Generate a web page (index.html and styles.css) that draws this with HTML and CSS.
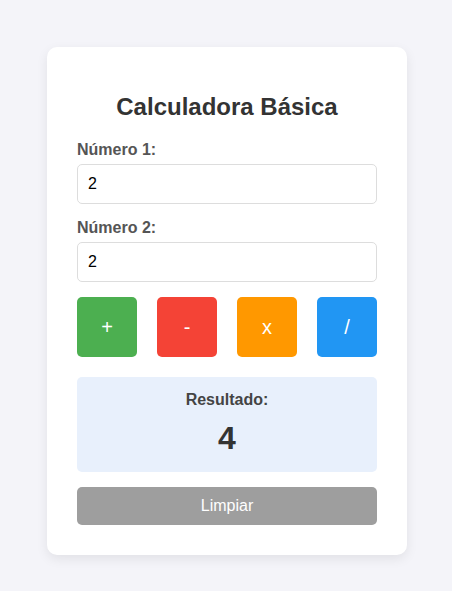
FILE: index.html
```html
<!DOCTYPE html>
<html lang="es">
<head>
<meta charset="utf-8">
<title>Calculadora Básica</title>
<link rel="stylesheet" href="styles.css">
</head>
<body>
<div class="card">
  <h2 class="title">Calculadora Básica</h2>
  <label class="label" for="n1">Número 1:</label>
  <input class="field" id="n1" type="number" value="2">
  <label class="label" for="n2">Número 2:</label>
  <input class="field" id="n2" type="number" value="2">
  <div class="ops">
    <button class="op op-add">+</button>
    <button class="op op-sub">-</button>
    <button class="op op-mul">x</button>
    <button class="op op-div">/</button>
  </div>
  <div class="result">
    <div class="result-label">Resultado:</div>
    <div class="result-value">4</div>
  </div>
  <button class="clear">Limpiar</button>
</div>
</body>
</html>
```
FILE: styles.css
```css
html, body {
  margin: 0;
  padding: 0;
}
body {
  background: #f4f4f9;
  font-family: "Liberation Sans", Arial, sans-serif;
  display: flex;
  justify-content: center;
  padding-top: 47px;
  padding-left: 2px;
  min-height: 591px;
  box-sizing: border-box;
}
.card {
  width: 300px;
  padding: 30px;
  background: #ffffff;
  border-radius: 10px;
  box-shadow: 0 4px 12px rgba(0, 0, 0, 0.08);
  height: 448px;
}
.title {
  margin: 16px 0 20px;
  font-size: 24px;
  font-weight: bold;
  color: #333333;
  text-align: center;
}
.label {
  display: block;
  font-size: 16px;
  font-weight: bold;
  color: #555555;
  margin-bottom: 5px;
}
.field {
  display: block;
  width: 100%;
  box-sizing: border-box;
  padding: 10px;
  font-family: "Liberation Sans", Arial, sans-serif;
  font-size: 16px;
  color: #000000;
  border: 1px solid #dddddd;
  border-radius: 5px;
  margin-bottom: 15px;
  outline: none;
  -moz-appearance: textfield;
}
.field::-webkit-inner-spin-button,
.field::-webkit-outer-spin-button {
  -webkit-appearance: none;
  margin: 0;
}
.ops {
  display: flex;
  justify-content: space-between;
  margin-top: 15px;
  margin-bottom: 20px;
}
.op {
  width: 60px;
  height: 60px;
  border: none;
  border-radius: 5px;
  color: #ffffff;
  font-family: "Liberation Sans", Arial, sans-serif;
  font-size: 20px;
  padding: 0;
}
.op-add { background: #4caf50; }
.op-sub { background: #f44336; }
.op-mul { background: #ff9800; }
.op-div { background: #2196f3; }
.result {
  background: #e8f0fc;
  border-radius: 5px;
  padding: 14px 15px 15px;
  text-align: center;
  margin-bottom: 15px;
}
.result-label {
  font-size: 16px;
  font-weight: bold;
  color: #444444;
  margin-bottom: 11px;
}
.result-value {
  font-size: 32px;
  font-weight: bold;
  color: #333333;
}
.clear {
  display: block;
  width: 100%;
  height: 38px;
  border: none;
  border-radius: 5px;
  background: #9e9e9e;
  color: #ffffff;
  font-family: "Liberation Sans", Arial, sans-serif;
  font-size: 16px;
}
```
